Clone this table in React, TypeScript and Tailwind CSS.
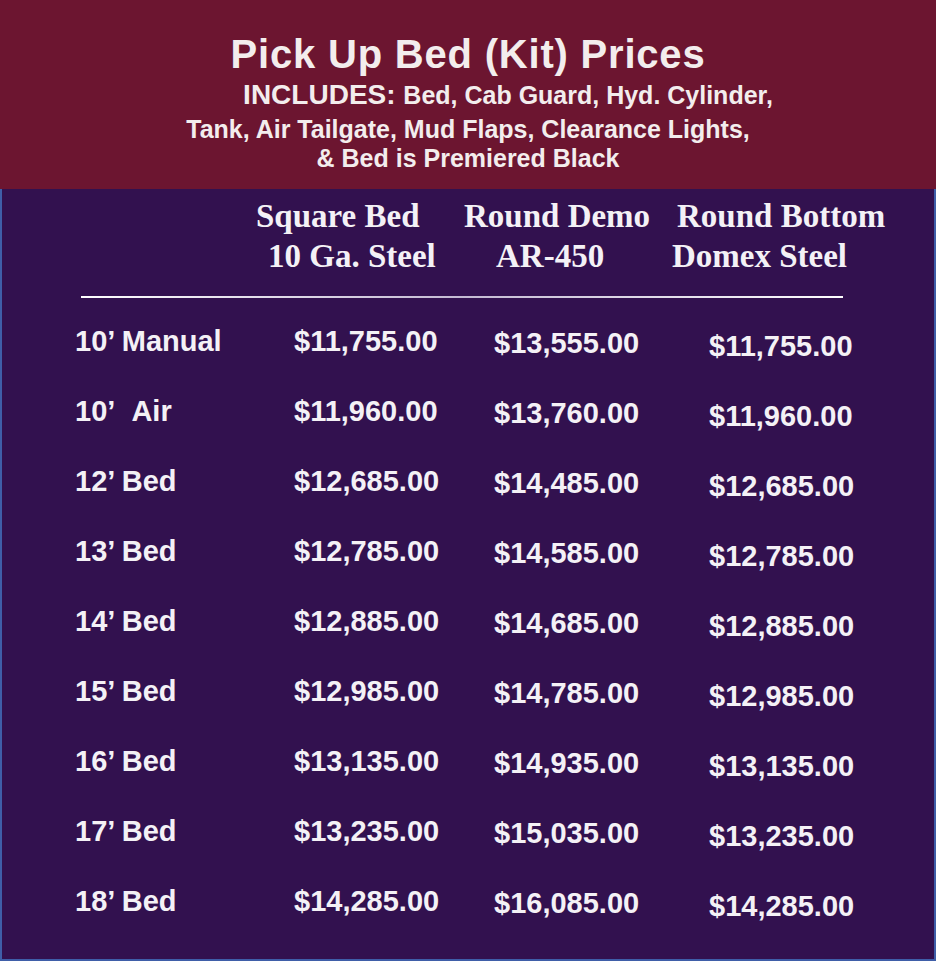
import React from "react";

const rows: [string, string, string, string][] = [
  ["10’ Manual", "$11,755.00", "$13,555.00", "$11,755.00"],
  ["10’\u00a0\u00a0Air", "$11,960.00", "$13,760.00", "$11,960.00"],
  ["12’ Bed", "$12,685.00", "$14,485.00", "$12,685.00"],
  ["13’ Bed", "$12,785.00", "$14,585.00", "$12,785.00"],
  ["14’ Bed", "$12,885.00", "$14,685.00", "$12,885.00"],
  ["15’ Bed", "$12,985.00", "$14,785.00", "$12,985.00"],
  ["16’ Bed", "$13,135.00", "$14,935.00", "$13,135.00"],
  ["17’ Bed", "$13,235.00", "$15,035.00", "$13,235.00"],
  ["18’ Bed", "$14,285.00", "$16,085.00", "$14,285.00"],
];

export default function App() {
  return (
    <div className="w-[936px] bg-white">
      <div className="h-[189px] bg-[#6c1530] text-[#f3eded] font-['Liberation_Sans',Arial,sans-serif] font-bold flex flex-col items-center pt-[32px]">
        <div className="text-[40px] leading-[44px] tracking-[0.8px]">Pick Up Bed (Kit) Prices</div>
        <div className="leading-[30px] mt-[4px] pl-[80px] whitespace-nowrap">
          <span className="text-[28px]">INCLUDES: </span>
          <span className="text-[25px]">Bed, Cab Guard, Hyd. Cylinder,</span>
        </div>
        <div className="text-[25px] leading-[30px] whitespace-nowrap">Tank, Air Tailgate, Mud Flaps, Clearance Lights,</div>
        <div className="text-[25px] leading-[29px] whitespace-nowrap">&amp; Bed is Premiered Black</div>
      </div>
      <div className="h-[772px] bg-[#32114f] border-x-2 border-b-2 border-[#3f5ea8] text-[#f4f1f6]">
        <div className="flex pt-[7px] font-['Liberation_Serif','Times_New_Roman',serif] font-bold text-[33px] leading-[40px] whitespace-nowrap">
          <div className="ml-[254px] w-[208px]">
            <div>Square Bed</div>
            <div className="pl-[12px]">10 Ga. Steel</div>
          </div>
          <div className="w-[208px]">
            <div>Round Demo</div>
            <div className="pl-[32px]">AR-450</div>
          </div>
          <div>
            <div className="pl-[5px]">Round Bottom</div>
            <div>Domex Steel</div>
          </div>
        </div>
        <div className="ml-[79px] mt-[20px] w-[762px] h-[2px] bg-gradient-to-r from-white via-[#c4bad3] to-white" />
        <div className="mt-[8px] font-['Liberation_Sans',Arial,sans-serif] font-bold text-[29px] leading-[70px] whitespace-nowrap">
          {rows.map((r) => (
            <div key={r[0]} className="flex h-[70px]">
              <div className="ml-[73px] w-[219px]">{r[0]}</div>
              <div className="w-[200px]">{r[1]}</div>
              <div className="w-[215px] pt-[2px]">{r[2]}</div>
              <div className="pt-[5px]">{r[3]}</div>
            </div>
          ))}
        </div>
      </div>
    </div>
  );
}
